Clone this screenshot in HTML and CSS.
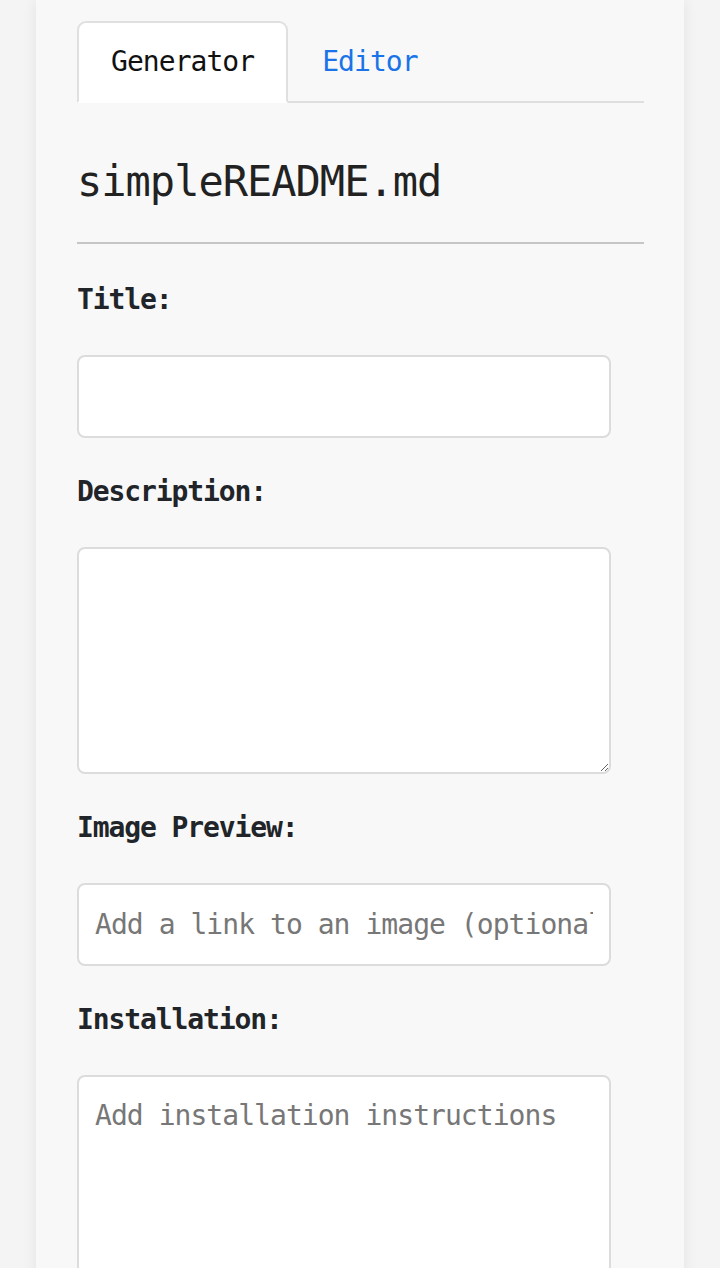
FILE: index.html
```html
<!DOCTYPE html>
<html lang="en">
<head>
<meta charset="utf-8">
<title>simpleREADME.md</title>
<link rel="stylesheet" href="styles.css">
</head>
<body>
<main class="card">
  <ul class="tabs">
    <li class="tab active">Generator</li>
    <li class="tab link">Editor</li>
  </ul>
  <h1 class="title">simpleREADME.md</h1>
  <hr class="rule">
  <form class="form">
    <div class="group">
      <label class="label" for="title">Title:</label>
      <input class="field" id="title" type="text">
    </div>
    <div class="group">
      <label class="label" for="desc">Description:</label>
      <textarea class="field area" id="desc"></textarea>
    </div>
    <div class="group">
      <label class="label" for="img">Image Preview:</label>
      <input class="field" id="img" type="text" placeholder="Add a link to an image (optional)">
    </div>
    <div class="group">
      <label class="label" for="inst">Installation:</label>
      <textarea class="field area" id="inst" placeholder="Add installation instructions"></textarea>
    </div>
  </form>
</main>
</body>
</html>
```

FILE: styles.css
```css
* { box-sizing: border-box; }

html, body {
  margin: 0;
  padding: 0;
}

body {
  background: #f4f4f4;
  font-family: "DejaVu Sans Mono", "Liberation Mono", monospace;
  color: #212529;
  height: 1268px;
  overflow: hidden;
}

.card {
  width: 648px;
  margin: 0 auto;
  min-height: 1268px;
  background: #f8f8f8;
  box-shadow: 0 0 14px rgba(0, 0, 0, 0.07);
  padding: 21px 40px 40px 41px;
}

.tabs {
  list-style: none;
  margin: 0;
  padding: 0;
  display: flex;
  border-bottom: 2px solid #dfdfdf;
}

.tab {
  height: 82px;
  padding: 0 32px 2px;
  display: flex;
  align-items: center;
  font-size: 28px;
  letter-spacing: -0.95px;
  border: 2px solid transparent;
  border-radius: 9px 9px 0 0;
  margin-bottom: -2px;
}

.tab.active {
  background: #ffffff;
  border-color: #e0e0e0 #e0e0e0 #ffffff;
  color: #111;
}

.tab.link {
  color: #1a73e8;
}

.title {
  margin: 54px 0 0;
  font-size: 42px;
  font-weight: normal;
  line-height: 50px;
  letter-spacing: -1px;
  color: #222;
}

.rule {
  margin: 34.5px 0 0;
  border: 0;
  border-top: 2px solid #c6c6c6;
  height: 0;
}

.form {
  margin-top: 36px;
  display: flex;
  flex-direction: column;
  gap: 34px;
}

.group {
  display: flex;
  flex-direction: column;
}

.label {
  font-size: 28px;
  font-weight: bold;
  line-height: 40px;
  letter-spacing: -1.1px;
  margin-bottom: 35px;
  color: #212529;
}

.field {
  width: 534px;
  height: 83px;
  border: 2px solid #dcdcdc;
  border-radius: 8px;
  background: #fff;
  font-family: "DejaVu Sans Mono", "Liberation Mono", monospace;
  font-size: 28px;
  letter-spacing: -0.95px;
  padding: 0 16px;
  color: #212529;
  outline: none;
}

.field::placeholder {
  color: #777;
  opacity: 1;
}

.area {
  height: 227px;
  padding: 18px 16px;
  line-height: 42px;
  resize: vertical;
}
```
